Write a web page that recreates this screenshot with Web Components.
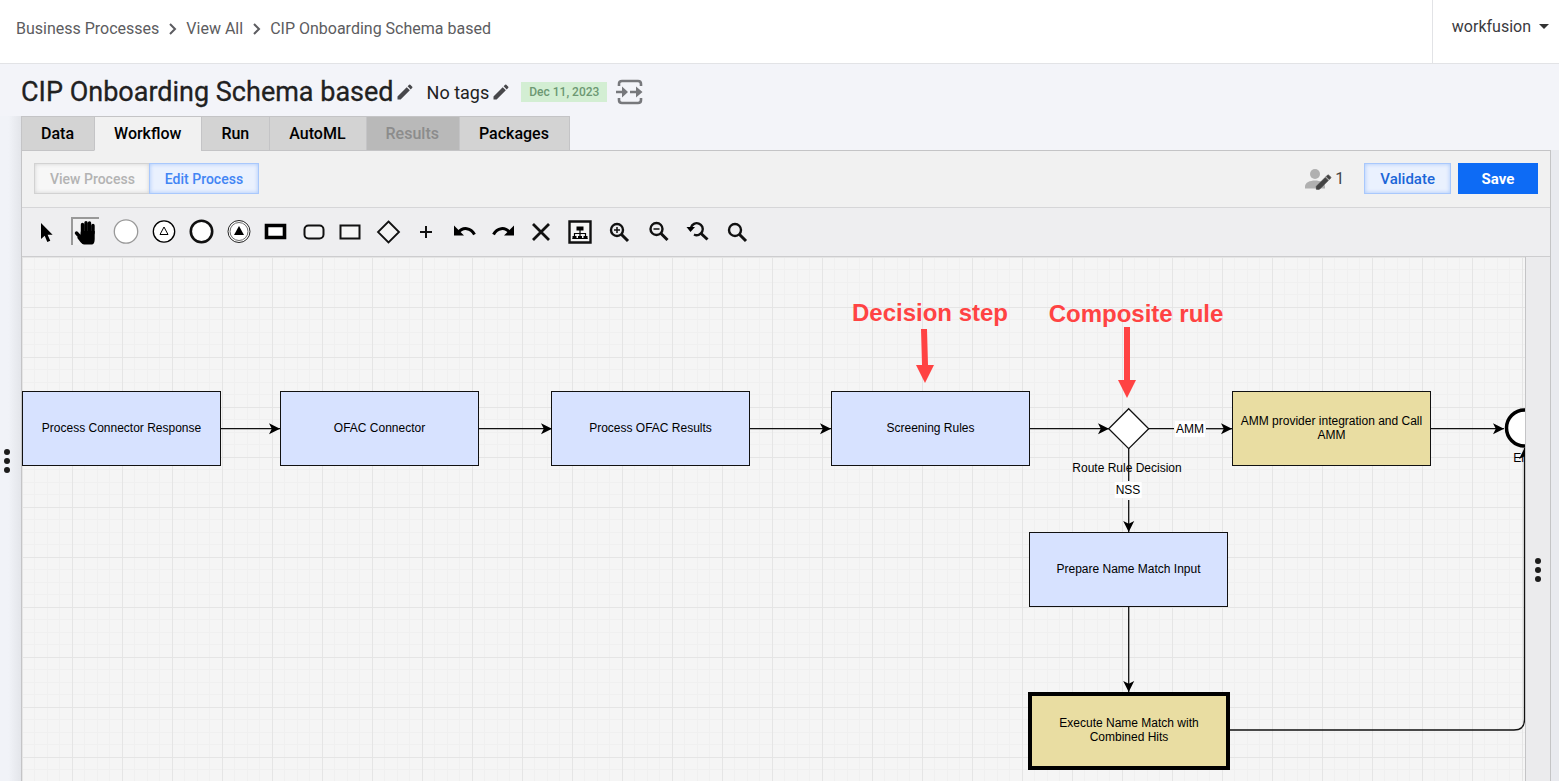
<!DOCTYPE html>
<html lang="en">
<head>
<meta charset="utf-8">
<title>CIP Onboarding Schema based</title>
<style>
  html, body { margin: 0; height: 100%; }
  body {
    font-family: Roboto, "Liberation Sans", sans-serif;
    font-size: 16px;
    color: #212121;
    background: #f3f4f9;
    overflow: hidden;
    --line: #c4c4c6;
    --panel: #f1f1f1;
    --blue: #0d6bf5;
  }
</style>
</head>
<body>
<process-app></process-app>

<script>
const PENCIL = 'M3 17.25V21h3.75L17.81 9.94l-3.75-3.75L3 17.25zM20.71 7.04a1 1 0 000-1.41l-2.34-2.34a1 1 0 00-1.41 0l-1.83 1.83 3.75 3.75 1.83-1.83z';

// Toolbar icons, all on a 26x26 box
const LENS = '<circle cx="11" cy="11" r="6" fill="none" stroke="#111" stroke-width="2.4"/><path d="M15.5 15.5l6.5 6.5" stroke="#111" stroke-width="3"/>';
const TOOLS = [
  ['Select', 26, '<path d="M8 4v16l3.700-3.300 2.600 6.300 3-1.300-2.700-6h5z"/>'],
  ['Pan', 26, '<g stroke="#000" stroke-linecap="round" stroke-width="3.400"><path d="M9.500 14V5.500M13 13V3.800M16.500 13V4M20 14V6.500"/><path d="M8 19L3.500 14"/></g><path d="M8 12h13.700v8c0 3-1 5.500-2.500 5.500H11c-2 0-4-3-7-7l3-1z"/>'],
  ['Start event', 26, '<circle cx="13" cy="12.500" r="11.700" fill="#fff" stroke="#999" stroke-width="1.300"/>'],
  ['Signal start', 23, '<circle cx="12" cy="12.500" r="10.700" fill="#fff" stroke="#000" stroke-width="1.300"/><path d="M12 8l4 7.500H8z" fill="#fff" stroke="#000"/>'],
  ['End event', 23, '<circle cx="12.500" cy="12.500" r="10.700" fill="#fff" stroke="#111" stroke-width="2.600"/>'],
  ['Signal end', 23, '<circle cx="13" cy="12.500" r="11" fill="#fff" stroke="#222"/><circle cx="13" cy="12.500" r="9" fill="none" stroke="#444" stroke-width=".8"/><path d="M13 7l5 9H8z"/>'],
  ['Call activity', 23, '<path d="M3.500 6.500h18v12h-18z" fill="#fff" stroke="#000" stroke-width="3.600"/>'],
  ['Subprocess', 23, '<rect x="4.500" y="6.500" width="19" height="13" rx="4" fill="#f4f4f4" stroke="#111" stroke-width="2"/>'],
  ['Task', 23, '<path d="M3.500 6.500h19v13h-19z" fill="#f4f4f4" stroke="#111" stroke-width="2"/>'],
  ['Gateway', 26, '<path d="M13.500 2.500L24 13 13.500 23.500 3 13z" fill="#f4f4f4" stroke="#111" stroke-width="1.800"/>'],
  ['Add', 24, '<path d="M12 7v12M6 13h12" stroke="#111" stroke-width="2"/>'],
  ['Undo', 24, '<path d="M6 14c5-7 13-5 16.500 1.500" fill="none" stroke="#000" stroke-width="3"/><path d="M2 6.500v10h10z"/>'],
  ['Redo', 24, '<path d="M20 14c-5-7-13-5-16.500 1.500" fill="none" stroke="#000" stroke-width="3"/><path d="M24 6.500v10H14z"/>'],
  ['Delete', 24, '<path d="M5 5l16 16M21 5L5 21" stroke="#111" stroke-width="2.800"/>'],
  ['Layout', 25, '<path d="M2.500 2.500h21v21h-21z" fill="#f4f4f4" stroke="#111" stroke-width="2.400"/><path d="M9.500 7.500h7v4h-7zM5.500 17h4v3h-4zM11 17h4v3h-4zM16.500 17h4v3h-4z"/><path d="M13 11v6M7.500 17v-2.500h11V17M5.500 19.500h15" fill="none" stroke="#000" stroke-width="1.200"/>'],
  ['Zoom in', 25, LENS + '<path d="M11 8v6M8 11h6" stroke="#111" stroke-width="1.500"/>'],
  ['Zoom out', 25, '<g transform="translate(0.5 -1)">' + LENS + '<path d="M8 11h6" stroke="#111" stroke-width="1.500"/></g>'],
  ['Actual size', 25, '<g transform="translate(1 -1.500)"><path d="M6 10a6 6 0 1 1 3 7" fill="none" stroke="#111" stroke-width="2.400"/><path d="M15.500 15.500l7 6.500" stroke="#111" stroke-width="3"/><path d="M1.500 9.500h8.500l-4.500 5z"/></g>'],
  ['Fit', 25, '<g transform="translate(1 0)">' + LENS + '</g>']
];

class BaseElement extends HTMLElement {
  constructor() {
    super();
    this.attachShadow({ mode: 'open' });
  }
  connectedCallback() {
    this.shadowRoot.innerHTML = this.render();
  }
}

class AppHeader extends BaseElement {
  render() {
    return `
      <style>
        :host { display: flex; height: 63px; background: #fff; border-bottom: 1px solid #e2e3e6; }
        nav { display: flex; flex: 1; align-items: center; gap: 9px; padding: 0 16px 6px; }
        a { color: #5c5c60; text-decoration: none; }
        .user { display: flex; align-items: center; border-left: 1px solid #e2e3e6; padding: 0 10px 10px 19px; }
        button { display: flex; align-items: center; gap: 8px; border: 0; padding: 0; background: none; font: inherit; color: #3a3a3e; }
        .caret { border: 5px solid transparent; border-top-color: #333; border-bottom: 0; }
      </style>
      <nav aria-label="Breadcrumb">
        <a href="#processes">Business Processes</a>
        <svg width="9" height="12" viewBox="0 0 9 12"><path d="M2 1l5 5-5 5" fill="none" stroke="#5c5c60" stroke-width="2"/></svg>
        <a href="#all">View All</a>
        <svg width="9" height="12" viewBox="0 0 9 12"><path d="M2 1l5 5-5 5" fill="none" stroke="#5c5c60" stroke-width="2"/></svg>
        <a href="#current">CIP Onboarding Schema based</a>
      </nav>
      <div class="user"><button type="button">workfusion <span class="caret"></span></button></div>`;
  }
}
customElements.define('app-header', AppHeader);

class PageTitle extends BaseElement {
  render() {
    return `
      <style>
        :host { display: flex; align-items: center; height: 52px; padding-top: 4px; box-sizing: border-box; }
        h1 { margin: 0; font-size: 27px; line-height: 32px; font-weight: 400; -webkit-text-stroke: 0.3px; }
        button { display: flex; border: 0; padding: 0; background: none; }
        .edit { margin: 0 12px 0 1px; }
        .edit svg { fill: #47474b; }
        .tags { font-size: 18px; }
        .tags + .edit { margin: 0 10px 0 2px; }
        time { padding: 0 8px; font-size: 12px; line-height: 20px; font-weight: 500; color: #6d9873; background: #d3eed3; }
        .flow { margin-left: 9px; }
      </style>
      <h1><slot></slot></h1>
      <button class="edit" type="button" aria-label="Edit name"><svg width="20" height="20" viewBox="0 0 24 24"><path d="${PENCIL}"/></svg></button>
      <span class="tags">No tags</span>
      <button class="edit" type="button" aria-label="Edit tags"><svg width="20" height="20" viewBox="0 0 24 24"><path d="${PENCIL}"/></svg></button>
      <time datetime="2023-12-11">Dec 11, 2023</time>
      <button class="flow" type="button" aria-label="Flow">
        <svg width="27" height="26" viewBox="0 0 27 26"><g fill="none" stroke="#77787c" stroke-width="2.600"><path d="M3 7V5q0-3 3-3h16q3 0 3 3v2M3 19v2q0 3 3 3h16q3 0 3-3v-2"/><path d="M0 13h8M14 13h8"/></g><path d="M6 7.500l6 5.500-6 5.500zM20 7.500l6.500 5.500-6.500 5.500z" fill="#77787c"/></svg>
      </button>`;
  }
}
customElements.define('page-title', PageTitle);

class TabBar extends BaseElement {
  render() {
    return `
      <style>
        :host { display: flex; }
        button {
          height: 35px; padding: 0 20px 0 19px; border: 1px solid var(--line); border-right-width: 0;
          background: #d3d3d3; color: #000; font: 500 16px Roboto, sans-serif;
        }
        button:last-child { border-right-width: 1px; }
        button.active { background: var(--panel); border-bottom-color: var(--panel); }
        button:disabled { background: #b9b9b9; color: #8c8c8c; }
      </style>
      ${['Data', 'Workflow', 'Run', 'AutoML', 'Results', 'Packages'].map((t) =>
        `<button type="button" class="${t === 'Workflow' ? 'active' : ''}" ${t === 'Results' ? 'disabled' : ''}>${t}</button>`).join('')}`;
  }
}
customElements.define('tab-bar', TabBar);

class ActionBar extends BaseElement {
  render() {
    return `
      <style>
        :host { display: flex; align-items: center; height: 55px; padding: 0 12px 1px; border-bottom: 1px solid #d6d6d8; }
        button {
          height: 31px; padding: 0 15px; border: 1px solid #a9c8fc; background: #eaf1fe; color: #4285f4;
          font: 500 14px Roboto, sans-serif; box-shadow: inset 0 0 4px #a9c8fc;
        }
        .view { padding-right: 14px; background: #f7f7f7; border-color: #d2d2d2; border-right: 0; color: #b3b3b3; box-shadow: inset 0 0 4px #d2d2d2; }
        .users { display: flex; align-items: center; gap: 3px; margin: 0 20px 0 auto; color: #444; }
        .validate { font-size: 15px; color: #1b66d8; }
        .save { width: 80px; margin-left: 7px; font-size: 15px; font-weight: 700; background: var(--blue); border-color: var(--blue); color: #fff; box-shadow: none; }
      </style>
      <button class="view" type="button">View Process</button>
      <button type="button">Edit Process</button>
      <span class="users">
        <svg width="27" height="24" viewBox="0 0 27 24"><circle cx="10" cy="7" r="5" fill="#b0b0b0"/><path d="M0 21.500v-2c0-4 5-6 10-6s10 2 10 6v2z" fill="#b0b0b0"/><path transform="translate(9 5.500) scale(.8)" d="${PENCIL}" fill="#444" stroke="#444"/></svg>
        1
      </span>
      <button class="validate" type="button">Validate</button>
      <button class="save" type="button">Save</button>`;
  }
}
customElements.define('action-bar', ActionBar);

class ToolBar extends BaseElement {
  render() {
    return `
      <style>
        :host { display: flex; align-items: center; gap: 14px; height: 48px; padding: 0 11px; background: #eeeef0; border-bottom: 1px solid #cdcdcf; }
        button { display: flex; justify-content: center; height: 26px; padding: 0; border: 0; background: none; }
        svg { flex: none; }
        button[aria-pressed] { box-shadow: -1px -1px 0 1px #999; background: #f1f1f2; }
      </style>
      ${TOOLS.map(([name, width, icon]) =>
        `<button type="button" style="width:${width}px" aria-label="${name}" ${name === 'Pan' ? 'aria-pressed="true"' : ''}><svg width="26" height="26" viewBox="0 0 26 26">${icon}</svg></button>`).join('')}`;
  }
}
customElements.define('tool-bar', ToolBar);

class DragHandle extends BaseElement {
  render() {
    return `
      <style>
        :host { display: flex; flex-direction: column; align-items: center; gap: 3px; }
        i { width: 6px; height: 6px; border-radius: 50%; background: #1c1c1c; }
      </style>
      <i></i><i></i><i></i>`;
  }
}
customElements.define('drag-handle', DragHandle);

// A task box on the canvas; x and y are canvas coordinates
class FlowNode extends BaseElement {
  render() {
    this.style.left = this.getAttribute('x') + 'px';
    this.style.top = this.getAttribute('y') + 'px';
    return `
      <style>
        :host {
          position: absolute; box-sizing: border-box; display: flex; align-items: center; justify-content: center;
          width: 199px; height: 75px; padding: 0 4px 2px; border: 1px solid #111; background: #d7e2ff;
          font: 12px/14px "Liberation Sans", Arial, sans-serif; color: #000; text-align: center;
        }
        :host([kind="call"]) { background: #e9dda2; }
        :host([bold]) { width: 202px; height: 78px; padding: 0 20px 2px; border: 4px solid #000; background: #e9dda2; }
      </style>
      <span><slot></slot></span>`;
  }
}
customElements.define('flow-node', FlowNode);

// Text on the canvas, centred on x and y
class FlowLabel extends BaseElement {
  render() {
    this.style.left = this.getAttribute('x') + 'px';
    this.style.top = this.getAttribute('y') + 'px';
    return `
      <style>
        :host {
          position: absolute; transform: translate(-50%, -50%); white-space: nowrap;
          font: 12px/16px "Liberation Sans", Arial, sans-serif; color: #000;
        }
        :host([kind="edge"]) { background: #fff; padding: 0 1px; }
        :host([kind="note"]) { font-size: 24px; line-height: 28px; font-weight: 700; color: #ff4343; }
      </style>
      <slot></slot>`;
  }
}
customElements.define('flow-label', FlowLabel);

class ProcessCanvas extends BaseElement {
  render() {
    return `
      <style>
        :host { display: block; position: relative; overflow: hidden; background: #f5f5f5; }
        svg { position: absolute; left: 0; top: 0; width: 100%; height: 100%; }
      </style>
      <svg>
        <defs>
          <pattern id="grid" width="50" height="50" patternUnits="userSpaceOnUse">
            <path d="M12.500 0v50M25.500 0v50M37.500 0v50M0 12.500h50M0 25.500h50M0 37.500h50" stroke="#f0f0f0"/>
            <path d="M.5 0v50M0 .5h50" stroke="#e5e5e5"/>
          </pattern>
          <marker id="arrow" markerUnits="userSpaceOnUse" markerWidth="12" markerHeight="12" refX="11" refY="6" orient="auto">
            <path d="M0 .5L11 6 0 11.500 2.800 6z"/>
          </marker>
        </defs>
        <rect width="100%" height="100%" fill="url(#grid)"/>
      </svg>
      <slot></slot>
      <svg>
        <g fill="none" stroke="#111" stroke-width="1.300">
          <g marker-end="url(#arrow)">
            <path d="M199 171.700h59"/>
            <path d="M457 171.700h73"/>
            <path d="M728 171.700h81"/>
            <path d="M1008 171.700h79"/>
            <path d="M1184 171.700h26"/>
            <path d="M1409 171.700h73"/>
            <path d="M1106.700 243v32"/>
            <path d="M1106.700 350v85"/>
            <path d="M1208 473h284q10.500 0 10.500-10.500V191"/>
          </g>
          <path d="M1126 171.700h26M1106.700 191v33"/>
          <path d="M1106.700 151.700l20 20-20 20-20-20z" fill="#fff"/>
        </g>
        <circle cx="1502.500" cy="171" r="18" fill="#fff" stroke="#000" stroke-width="3.500"/>
        <g fill="#ff4343">
          <path d="M899 72h6l1 36h6l-9 18-9-18h6z"/>
          <path d="M1102 70h6v53h6l-9 18-9-18h6z"/>
        </g>
      </svg>`;
  }
}
customElements.define('process-canvas', ProcessCanvas);

class ProcessApp extends BaseElement {
  render() {
    return `
      <style>
        :host { display: flex; flex-direction: column; height: 100vh; }
        main { display: flex; flex: 1; min-height: 0; }
        .left { flex: none; width: 21px; display: flex; flex-direction: column; }
        .left::before { content: ""; height: 52px; }
        .rail { flex: 1; padding: 333px 7px 0 0; background: linear-gradient(90deg, #f1f3f8 40%, #e3e5ea); }
        .content { display: flex; flex-direction: column; flex: 1; min-width: 0; }
        tab-bar { margin-bottom: -1px; z-index: 1; }
        .panel { display: flex; flex-direction: column; flex: 1; background: var(--panel); border: 1px solid var(--line); border-bottom: 0; }
        .work { display: flex; flex: 1; }
        process-canvas { flex: 1; }
        aside { width: 24px; padding-top: 301px; background: #ebebed; border-left: 1px solid var(--line); }
        .right { flex: none; width: 8px; margin-top: 86px; background: #e9eaef; }
      </style>
      <app-header></app-header>
      <main>
        <div class="left"><div class="rail"><drag-handle></drag-handle></div></div>
        <div class="content">
          <page-title>CIP Onboarding Schema based</page-title>
          <tab-bar></tab-bar>
          <div class="panel">
            <action-bar></action-bar>
            <tool-bar></tool-bar>
            <div class="work">
              <process-canvas>
                <flow-node x="0" y="134">Process Connector Response</flow-node>
                <flow-node x="258" y="134">OFAC Connector</flow-node>
                <flow-node x="529" y="134">Process OFAC Results</flow-node>
                <flow-node x="809" y="134">Screening Rules</flow-node>
                <flow-node x="1210" y="134" kind="call">AMM provider integration and Call AMM</flow-node>
                <flow-node x="1007" y="275">Prepare Name Match Input</flow-node>
                <flow-node x="1006" y="435" bold>Execute Name Match with Combined Hits</flow-node>
                <flow-label x="1168" y="172" kind="edge">AMM</flow-label>
                <flow-label x="1106" y="233" kind="edge">NSS</flow-label>
                <flow-label x="1105" y="211">Route Rule Decision</flow-label>
                <flow-label x="1502" y="201">End</flow-label>
                <flow-label x="908" y="56" kind="note">Decision step</flow-label>
                <flow-label x="1114" y="57" kind="note">Composite rule</flow-label>
              </process-canvas>
              <aside><drag-handle></drag-handle></aside>
            </div>
          </div>
        </div>
        <div class="right"></div>
      </main>`;
  }
}
customElements.define('process-app', ProcessApp);
</script>
</body>
</html>
